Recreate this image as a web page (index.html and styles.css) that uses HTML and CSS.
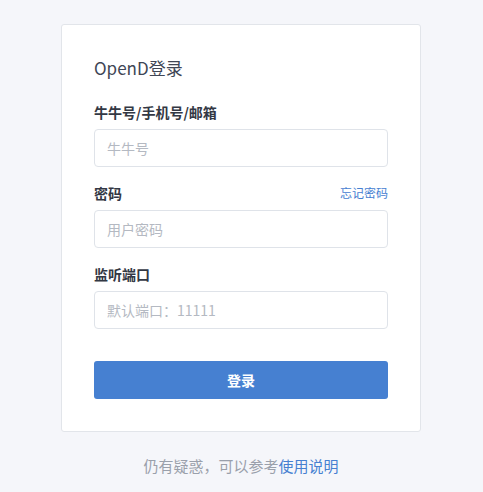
FILE: index.html
```html
<!DOCTYPE html>
<html lang="zh">
<head>
<meta charset="utf-8">
<link rel="stylesheet" href="styles.css">
</head>
<body>
<div class="page">
  <div class="card">
    <h1 class="title">OpenD登录</h1>
    <div class="field">
      <div class="label-row"><label class="label">牛牛号/手机号/邮箱</label></div>
      <input class="input" type="text" placeholder="牛牛号">
    </div>
    <div class="field">
      <div class="label-row"><label class="label">密码</label><a class="forgot" href="#">忘记密码</a></div>
      <input class="input" type="password" placeholder="用户密码">
    </div>
    <div class="field">
      <div class="label-row"><label class="label">监听端口</label></div>
      <input class="input" type="text" placeholder="默认端口：11111">
    </div>
    <button class="btn">登录</button>
  </div>
  <p class="footer">仍有疑惑，可以参考<a class="link" href="#">使用说明</a></p>
</div>
</body>
</html>
```
FILE: styles.css
```css
html, body {
  margin: 0;
  padding: 0;
  background: #f5f6fa;
  font-family: "Noto Sans CJK SC", "Noto Sans", sans-serif;
}
.page {
  display: flex;
  flex-direction: column;
  align-items: center;
  padding: 24px 1px 0 0;
}
.card {
  width: 294px;
  padding: 28px 32px 32px 32px;
  background: #fff;
  border: 1px solid #e2e5ea;
  border-radius: 3px;
  display: flex;
  flex-direction: column;
}
.title {
  margin: 0 0 18px;
  font-size: 17px;
  font-weight: 400;
  color: #404655;
  line-height: 30px;
}
.field {
  display: flex;
  flex-direction: column;
  margin-bottom: 15px;
}
.label-row {
  display: flex;
  justify-content: space-between;
  align-items: center;
  height: 21px;
  margin-bottom: 7px;
}
.label {
  font-size: 14px;
  font-weight: 700;
  color: #333844;
}
.forgot {
  font-size: 12px;
  color: #4680d1;
  text-decoration: none;
}
.input {
  box-sizing: border-box;
  width: 294px;
  height: 38px;
  border: 1px solid #dfe3e9;
  border-radius: 4px;
  padding: 0 12px;
  font-family: inherit;
  font-size: 14px;
  color: #333;
  outline: none;
}
.input::placeholder {
  color: #b4b9c2;
}
.btn {
  margin-top: 17px;
  width: 294px;
  height: 38px;
  border: none;
  border-radius: 3px;
  background: #4680d1;
  color: #fff;
  font-family: inherit;
  font-size: 14px;
  font-weight: 700;
}
.footer {
  margin: 23px 0 0;
  font-size: 15px;
  line-height: 22px;
  color: #9aa0ab;
}
.link {
  color: #4680d1;
  text-decoration: none;
}
```
